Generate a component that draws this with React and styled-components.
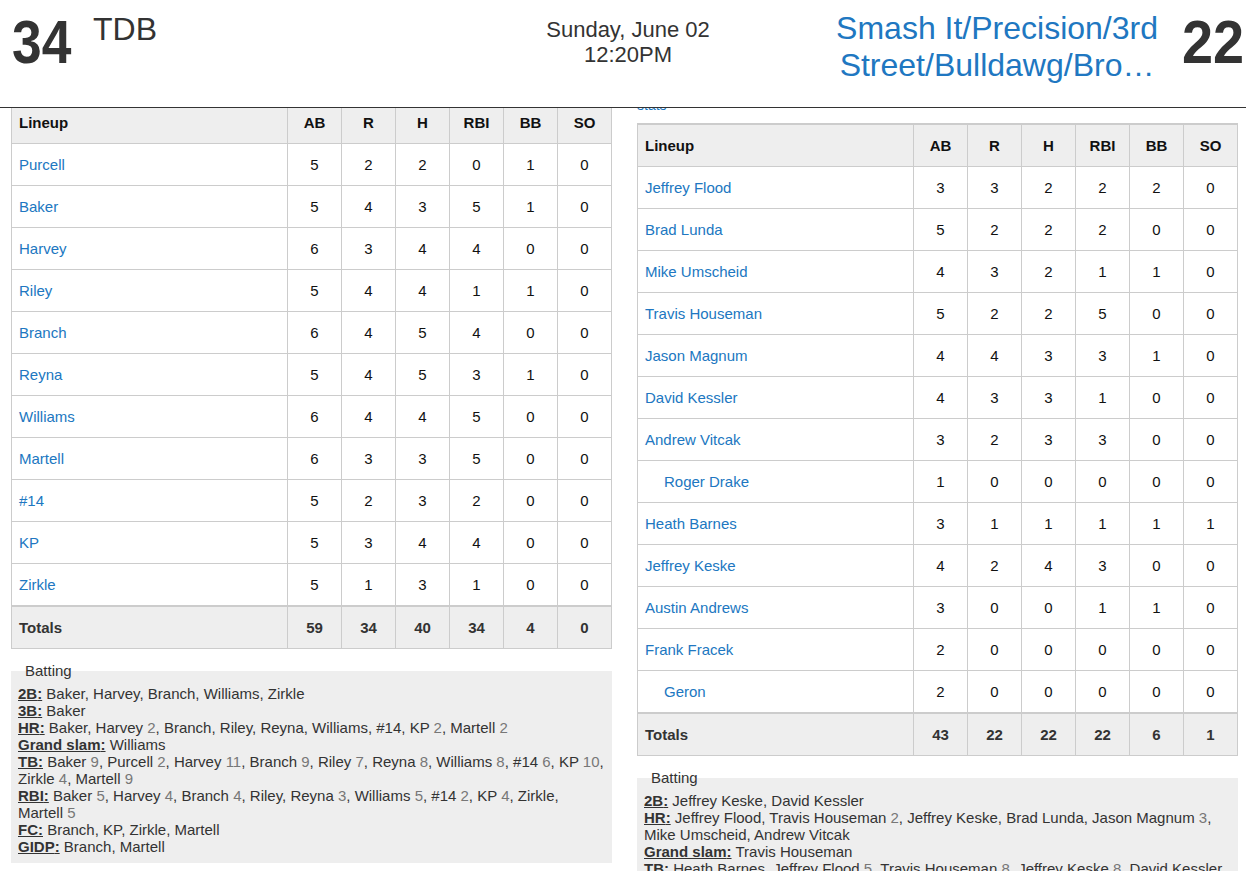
import styled, { createGlobalStyle } from 'styled-components'

const GlobalStyle = createGlobalStyle`
  html, body {
    margin: 0;
    padding: 0;
    height: 100%;
    overflow: hidden;
    background: #fff;
  }
  body {
    font-family: "Liberation Sans", Arial, sans-serif;
    color: #333;
  }
`;

const Header = styled.header`
  position: fixed;
  top: 0;
  left: 0;
  right: 0;
  z-index: 10;
  height: 108px;
  box-sizing: border-box;
  background: #fff;
  border-bottom: 1px solid #333;
  display: flex;
  align-items: flex-start;
  padding: 11px 2px 0 12px;
`;

const Side = styled.div`
  flex: 1;
  display: flex;
  align-items: flex-start;
  justify-content: ${p => (p.$right ? 'flex-end' : 'flex-start')};
  gap: ${p => (p.$right ? '13px' : '12px')};
`;

const Score = styled.div`
  margin-top: -1px;
  font-size: 62px;
  line-height: 64px;
  font-weight: bold;
  color: #333;
  transform: scaleX(${p => (p.$right ? 0.9 : 0.86)});
  transform-origin: ${p => (p.$right ? 'right' : 'left')} center;
`;

const HomeName = styled.div`
  font-size: 32px;
  line-height: 37px;
  color: #333;
`;

const AwayName = styled.a`
  display: block;
  width: 330px;
  margin-top: -1px;
  font-size: 32px;
  line-height: 37px;
  text-align: center;
  color: #2077c1;
  text-decoration: none;
`;

const DateBlock = styled.div`
  margin-top: 6px;
  font-size: 22px;
  line-height: 25px;
  text-align: center;
  color: #333;
`;

const Main = styled.main`
  display: grid;
  grid-template-columns: 1fr 1fr;
  column-gap: 25px;
  align-items: start;
  padding: 97px 8px 0 11px;
`;

const Column = styled.section`
  padding-top: ${p => p.$offset || 0}px;
  min-width: 0;
`;

const StatsLink = styled.a`
  display: block;
  font-size: 14px;
  line-height: 16px;
  margin-bottom: 10px;
  color: #2077c1;
  text-decoration: none;
`;

const Table = styled.table`
  width: 100%;
  table-layout: fixed;
  border-collapse: collapse;
  border-top: 2px solid #ccc;
  font-size: 15px;
  color: #111;
`;

const Th = styled.th`
  box-sizing: border-box;
  background: #eee;
  border: 1px solid #ccc;
  padding: 11px 7px;
  line-height: 19px;
  font-weight: bold;
  text-align: ${p => (p.$left ? 'left' : 'center')};
  width: ${p => (p.$left ? 'auto' : '54px')};
`;

const Td = styled.td`
  border: 1px solid #ccc;
  border-top: ${p => (p.$total ? '2px' : '1px')} solid #ccc;
  padding: 11px 7px;
  padding-left: ${p => (p.$sub ? '26px' : '7px')};
  line-height: 19px;
  text-align: ${p => (p.$left ? 'left' : 'center')};
  background: ${p => (p.$total ? '#eee' : '#fff')};
  font-weight: ${p => (p.$total ? 'bold' : 'normal')};
  color: ${p => (p.$total ? '#333' : '#111')};
`;

const PlayerLink = styled.a`
  color: #2077c1;
  text-decoration: none;
`;

const Box = styled.fieldset`
  margin: 14px 0 0;
  padding: 6px 5px 8px 7px;
  border: none;
  background: #eee;
  min-width: 0;
  font-size: 15px;
  line-height: 17px;
  color: #333;
`;

const Legend = styled.legend`
  margin-left: 5px;
  padding: 0 2px;
  font-size: 15px;
  line-height: 16px;
  color: #333;
`;

const Line = styled.div``;

const Label = styled.span`
  font-weight: bold;
  text-decoration: underline;
  color: #333;
`;

const Count = styled.span`
  color: #777;
`;

const cols = ['AB', 'R', 'H', 'RBI', 'BB', 'SO'];

const home = {
  players: [
    ['Purcell', 5, 2, 2, 0, 1, 0],
    ['Baker', 5, 4, 3, 5, 1, 0],
    ['Harvey', 6, 3, 4, 4, 0, 0],
    ['Riley', 5, 4, 4, 1, 1, 0],
    ['Branch', 6, 4, 5, 4, 0, 0],
    ['Reyna', 5, 4, 5, 3, 1, 0],
    ['Williams', 6, 4, 4, 5, 0, 0],
    ['Martell', 6, 3, 3, 5, 0, 0],
    ['#14', 5, 2, 3, 2, 0, 0],
    ['KP', 5, 3, 4, 4, 0, 0],
    ['Zirkle', 5, 1, 3, 1, 0, 0],
  ],
  totals: [59, 34, 40, 34, 4, 0],
  batting: [
    ['2B', [['Baker'], ['Harvey'], ['Branch'], ['Williams'], ['Zirkle']]],
    ['3B', [['Baker']]],
    ['HR', [['Baker'], ['Harvey', 2], ['Branch'], ['Riley'], ['Reyna'], ['Williams'], ['#14'], ['KP', 2], ['Martell', 2]]],
    ['Grand slam', [['Williams']]],
    ['TB', [['Baker', 9], ['Purcell', 2], ['Harvey', 11], ['Branch', 9], ['Riley', 7], ['Reyna', 8], ['Williams', 8], ['#14', 6], ['KP', 10], ['Zirkle', 4], ['Martell', 9]]],
    ['RBI', [['Baker', 5], ['Harvey', 4], ['Branch', 4], ['Riley'], ['Reyna', 3], ['Williams', 5], ['#14', 2], ['KP', 4], ['Zirkle'], ['Martell', 5]]],
    ['FC', [['Branch'], ['KP'], ['Zirkle'], ['Martell']]],
    ['GIDP', [['Branch'], ['Martell']]],
  ],
};

const away = {
  players: [
    ['Jeffrey Flood', 3, 3, 2, 2, 2, 0],
    ['Brad Lunda', 5, 2, 2, 2, 0, 0],
    ['Mike Umscheid', 4, 3, 2, 1, 1, 0],
    ['Travis Houseman', 5, 2, 2, 5, 0, 0],
    ['Jason Magnum', 4, 4, 3, 3, 1, 0],
    ['David Kessler', 4, 3, 3, 1, 0, 0],
    ['Andrew Vitcak', 3, 2, 3, 3, 0, 0],
    ['Roger Drake', 1, 0, 0, 0, 0, 0, true],
    ['Heath Barnes', 3, 1, 1, 1, 1, 1],
    ['Jeffrey Keske', 4, 2, 4, 3, 0, 0],
    ['Austin Andrews', 3, 0, 0, 1, 1, 0],
    ['Frank Fracek', 2, 0, 0, 0, 0, 0],
    ['Geron', 2, 0, 0, 0, 0, 0, true],
  ],
  totals: [43, 22, 22, 22, 6, 1],
  batting: [
    ['2B', [['Jeffrey Keske'], ['David Kessler']]],
    ['HR', [['Jeffrey Flood'], ['Travis Houseman', 2], ['Jeffrey Keske'], ['Brad Lunda'], ['Jason Magnum', 3], ['Mike Umscheid'], ['Andrew Vitcak']]],
    ['Grand slam', [['Travis Houseman']]],
    ['TB', [['Heath Barnes'], ['Jeffrey Flood', 5], ['Travis Houseman', 8], ['Jeffrey Keske', 8], ['David Kessler', 4], ['Brad Lunda', 5], ['Jason Magnum', 12], ['Mike Umscheid', 5], ['Andrew Vitcak', 6]]],
    ['RBI', [['Jeffrey Flood', 2], ['Brad Lunda', 2], ['Mike Umscheid'], ['Travis Houseman', 5], ['Jason Magnum', 3], ['David Kessler'], ['Andrew Vitcak', 3]]],
  ],
};

const BoxTable = ({ team }) => (
  <Table>
    <thead>
      <tr>
        <Th $left>Lineup</Th>
        {cols.map(c => <Th key={c}>{c}</Th>)}
      </tr>
    </thead>
    <tbody>
      {team.players.map(([name, ...rest]) => (
        <tr key={name}>
          <Td $left $sub={rest[6]}>
            <PlayerLink href="#">{name}</PlayerLink>
          </Td>
          {rest.slice(0, 6).map((v, i) => <Td key={i}>{v}</Td>)}
        </tr>
      ))}
      <tr>
        <Td $left $total>Totals</Td>
        {team.totals.map((v, i) => <Td key={i} $total>{v}</Td>)}
      </tr>
    </tbody>
  </Table>
);

const Batting = ({ rows }) => (
  <Box>
    <Legend>Batting</Legend>
    {rows.map(([label, items]) => (
      <Line key={label}>
        <Label>{label}:</Label>{' '}
        {items.map(([name, n], i) => (
          <span key={i}>
            {name}
            {n ? <Count> {n}</Count> : null}
            {i < items.length - 1 ? ', ' : ''}
          </span>
        ))}
      </Line>
    ))}
  </Box>
);

export default function App() {
  return (
    <>
      <GlobalStyle />
      <Header>
        <Side>
          <Score>34</Score>
          <HomeName>TDB</HomeName>
        </Side>
        <DateBlock>
          Sunday, June 02
          <br />
          12:20PM
        </DateBlock>
        <Side $right>
          <AwayName href="#">Smash It/Precision/3rd Street/Bulldawg/Bro…</AwayName>
          <Score $right>22</Score>
        </Side>
      </Header>
      <Main>
        <Column $offset={3}>
          <BoxTable team={home} />
          <Batting rows={home.batting} />
        </Column>
        <Column>
          <StatsLink href="#">stats</StatsLink>
          <BoxTable team={away} />
          <Batting rows={away.batting} />
        </Column>
      </Main>
    </>
  );
}
